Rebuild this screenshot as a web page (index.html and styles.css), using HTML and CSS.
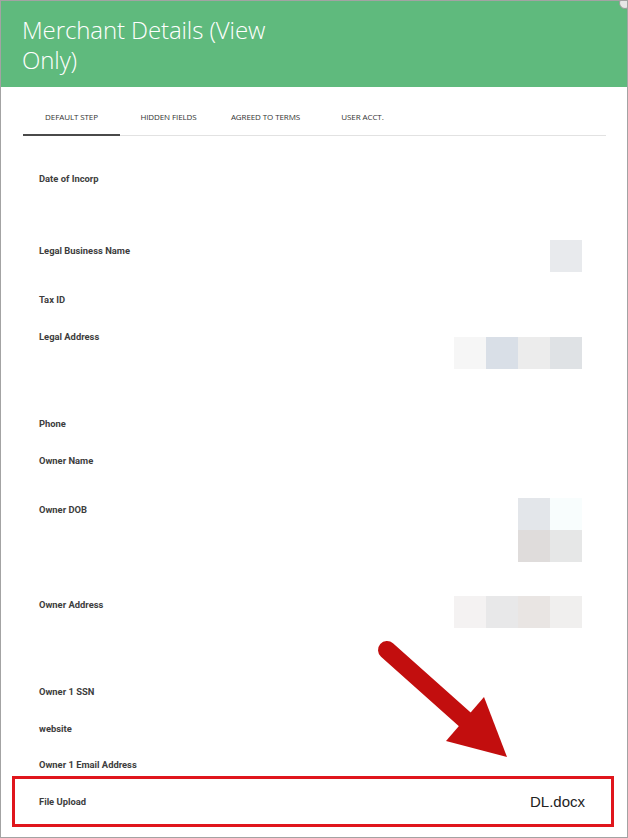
FILE: index.html
```html
<!DOCTYPE html>
<html>
<head>
    <title>Merchant Details</title>
    <link rel="stylesheet" href="styles.css">
</head>
<body>
    <div class="modal">
        <div class="modal-header">
            <h1 class="title">Merchant Details (View Only)</h1>
        </div>
        <span class="close-corner"></span>

        <div class="tabs">
            <div class="tab active">Default Step</div>
            <div class="tab">Hidden Fields</div>
            <div class="tab">Agreed to Terms</div>
            <div class="tab">User Acct.</div>
        </div>

        <div class="fields">
            <div class="row h72">
                <div class="label">Date of Incorp</div>
            </div>
            <div class="row h49">
                <div class="label">Legal Business Name</div>
                <div class="mosaic up5">
                    <span class="cell c-e8eaed"></span>
                </div>
            </div>
            <div class="row h37">
                <div class="label">Tax ID</div>
            </div>
            <div class="row h87">
                <div class="label">Legal Address</div>
                <div class="mosaic down6">
                    <span class="cell c-f6f6f6"></span>
                    <span class="cell c-d9dfe7"></span>
                    <span class="cell c-ececec"></span>
                    <span class="cell c-dfe2e5"></span>
                </div>
            </div>
            <div class="row h37">
                <div class="label">Phone</div>
            </div>
            <div class="row h49">
                <div class="label">Owner Name</div>
            </div>
            <div class="row h95">
                <div class="label">Owner DOB</div>
                <div class="mosaic grid2 up6">
                    <span class="cell c-e3e6ea"></span>
                    <span class="cell c-f8fdfd"></span>
                    <span class="cell c-dfdcdb"></span>
                    <span class="cell c-e6e7e7"></span>
                </div>
            </div>
            <div class="row h87">
                <div class="label">Owner Address</div>
                <div class="mosaic up3">
                    <span class="cell c-f4f2f2"></span>
                    <span class="cell c-e8e8e9"></span>
                    <span class="cell c-e9e5e3"></span>
                    <span class="cell c-f0efee"></span>
                </div>
            </div>
            <div class="row h37">
                <div class="label">Owner 1 SSN</div>
            </div>
            <div class="row h36">
                <div class="label">website</div>
            </div>
            <div class="row h37">
                <div class="label">Owner 1 Email Address</div>
            </div>
            <div class="row">
                <div class="label">File Upload</div>
                <div class="file-name">DL.docx</div>
            </div>
        </div>

        <!-- annotation -->
        <div class="highlight"></div>
        <svg class="arrow" width="160" height="140" viewBox="0 0 160 140">
            <line x1="17" y1="20" x2="100" y2="94" stroke="#c20e0e" stroke-width="18" stroke-linecap="round"/>
            <polygon points="76,111 114,67 137,127" fill="#c20e0e"/>
        </svg>
    </div>
</body>
</html>
```

FILE: styles.css
```css
body {
    margin: 0;
    font-family: "Open Sans", sans-serif;
    background-color: #fff;
}
.modal {
    position: relative;
    width: 628px;
    height: 838px;
    box-sizing: border-box;
    border: 1px solid #a3a3a3;
    overflow: hidden;
}
.modal-header {
    background-color: #5fba7d;
    height: 86px;
    box-sizing: border-box;
    padding: 14px 21px 0;
}
.title {
    margin: 0;
    width: 270px;
    color: #fff;
    font-size: 24px;
    font-weight: 300;
    line-height: 30px;
    letter-spacing: -0.1px;
}
.close-corner {
    position: absolute;
    top: -4px;
    right: -4px;
    width: 10px;
    height: 10px;
    border-radius: 50%;
    background-color: #e6e6e6;
    border: 1px solid #9a9a9a;
}
.tabs {
    display: flex;
    margin: 13px 21px 0 22px;
    border-bottom: 1px solid #e2e2e2;
}
.tab {
    width: 97px;
    text-align: center;
    font-size: 8px;
    line-height: 12px;
    text-transform: uppercase;
    letter-spacing: -0.1px;
    color: #333;
    padding: 11px 0;
    border-bottom: 2px solid transparent;
    margin-bottom: -1px;
}
.tab.active {
    border-bottom-color: #4a4a4a;
}
.fields {
    padding: 37px 42px 0 38px;
}
.row {
    display: flex;
    justify-content: space-between;
    align-items: flex-start;
    height: 37px;
}
.row.h36 { height: 36px; }
.row.h49 { height: 49px; }
.row.h72 { height: 72px; }
.row.h87 { height: 87px; }
.row.h95 { height: 95px; }
.label {
    font-family: Roboto, sans-serif;
    font-weight: 700;
    font-size: 9.4px;
    line-height: 12px;
    color: #3d3d3d;
}
.mosaic {
    display: flex;
    margin-right: 3px;
}
.mosaic.grid2 {
    flex-wrap: wrap;
    width: 64px;
}
.mosaic.up3 { margin-top: -3px; }
.mosaic.up5 { margin-top: -5px; }
.mosaic.up6 { margin-top: -6px; }
.mosaic.down6 { margin-top: 6px; }
.cell {
    width: 32px;
    height: 32px;
}
.c-e8eaed { background-color: #e8eaed; }
.c-f6f6f6 { background-color: #f6f6f6; }
.c-d9dfe7 { background-color: #d9dfe7; }
.c-ececec { background-color: #ececec; }
.c-dfe2e5 { background-color: #dfe2e5; }
.c-e3e6ea { background-color: #e3e6ea; }
.c-f8fdfd { background-color: #f8fdfd; }
.c-dfdcdb { background-color: #dfdcdb; }
.c-e6e7e7 { background-color: #e6e7e7; }
.c-f4f2f2 { background-color: #f4f2f2; }
.c-e8e8e9 { background-color: #e8e8e9; }
.c-e9e5e3 { background-color: #e9e5e3; }
.c-f0efee { background-color: #f0efee; }
.file-name {
    font-family: "Liberation Sans", Arial, sans-serif;
    font-size: 15px;
    line-height: 12px;
    color: #222;
}
.highlight {
    position: absolute;
    left: 11px;
    top: 775px;
    width: 602px;
    height: 51px;
    box-sizing: border-box;
    border: 3px solid #e0161c;
}
.arrow {
    position: absolute;
    left: 369px;
    top: 629px;
}
```
